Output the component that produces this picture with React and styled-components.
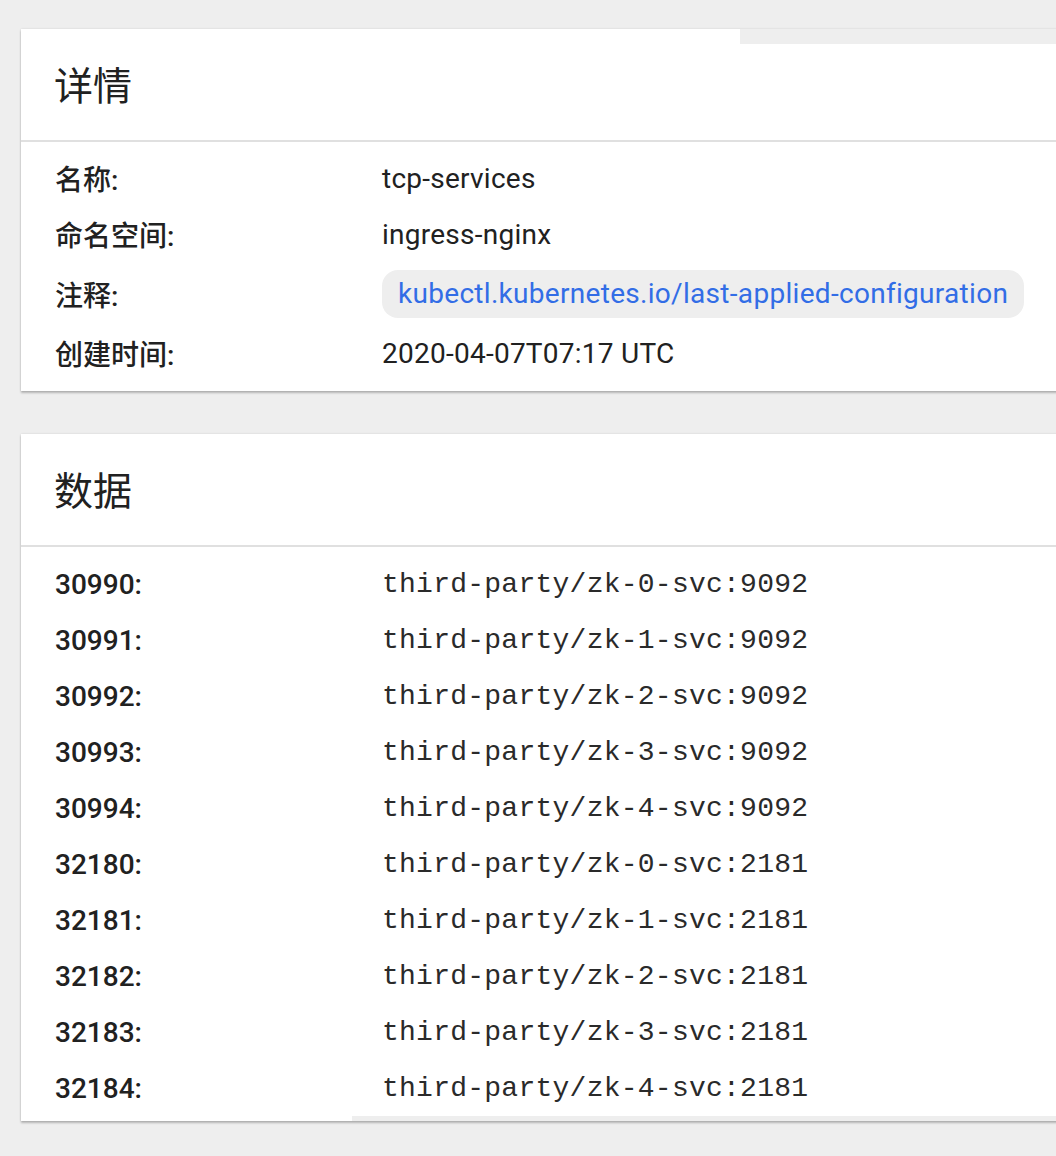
import React from "react";
import { styled, createGlobalStyle } from "styled-components";

const details = [
  { label: "名称:", value: "tcp-services" },
  { label: "命名空间:", value: "ingress-nginx" },
  { label: "注释:", chip: "kubectl.kubernetes.io/last-applied-configuration" },
  { label: "创建时间:", value: "2020-04-07T07:17 UTC" },
];

const data = [
  ["30990", "third-party/zk-0-svc:9092"],
  ["30991", "third-party/zk-1-svc:9092"],
  ["30992", "third-party/zk-2-svc:9092"],
  ["30993", "third-party/zk-3-svc:9092"],
  ["30994", "third-party/zk-4-svc:9092"],
  ["32180", "third-party/zk-0-svc:2181"],
  ["32181", "third-party/zk-1-svc:2181"],
  ["32182", "third-party/zk-2-svc:2181"],
  ["32183", "third-party/zk-3-svc:2181"],
  ["32184", "third-party/zk-4-svc:2181"],
];

const App = () => {
  return (
    <>
      <GlobalStyle />
      <Page>
        <Card>
          <TopMask />
          <CardHeader>详情</CardHeader>
          <CardBody $top={8} $bottom={10}>
            {details.map((item) => (
              <Row key={item.label} $tall={!!item.chip}>
                <Label>{item.label}</Label>
                {item.chip ? (
                  <Chip>{item.chip}</Chip>
                ) : (
                  <Value>{item.value}</Value>
                )}
              </Row>
            ))}
          </CardBody>
        </Card>

        <Card>
          <CardHeader>数据</CardHeader>
          <CardBody $top={9} $bottom={5}>
            {data.map(([key, value]) => (
              <Row key={key}>
                <Label>{key}:</Label>
                <MonoValue>{value}</MonoValue>
              </Row>
            ))}
          </CardBody>
          <BottomMask />
        </Card>
      </Page>
    </>
  );
};

export default App;

const GlobalStyle = createGlobalStyle`
  html, body {
    margin: 0;
    padding: 0;
    background: #eeeeee;
    overflow: hidden;
  }
  body {
    font-family: Roboto, "Noto Sans CJK SC", sans-serif;
    color: rgba(0, 0, 0, 0.87);
  }
`;

const Page = styled.div`
  display: flex;
  flex-direction: column;
  gap: 43px;
  padding: 29px 0 40px 21px;
  min-height: 1156px;
  box-sizing: border-box;
`;

const Card = styled.section`
  position: relative;
  background: #ffffff;
  margin-right: -60px;
  box-shadow: 0 2px 2px rgba(0, 0, 0, 0.24), 0 0 2px rgba(0, 0, 0, 0.12);
`;

const TopMask = styled.div`
  position: absolute;
  top: 0;
  left: 719px;
  right: 0;
  height: 15px;
  background: #eeeeee;
`;

const BottomMask = styled.div`
  position: absolute;
  bottom: 0;
  left: 331px;
  right: 0;
  height: 5px;
  background: #eeeeee;
`;

const CardHeader = styled.h2`
  margin: 0;
  height: 113px;
  box-sizing: border-box;
  padding: 0 0 3px 33px;
  display: flex;
  align-items: center;
  font-family: Roboto, "Noto Sans CJK SC", sans-serif;
  font-size: 39px;
  font-weight: 400;
  color: #212121;
  border-bottom: 2px solid #e0e0e0;
`;

const CardBody = styled.div`
  padding: ${(p) => p.$top}px 0 ${(p) => p.$bottom}px 34px;
`;

const Row = styled.div`
  display: grid;
  grid-template-columns: 327px 1fr;
  align-items: center;
  height: ${(p) => (p.$tall ? 63 : 56)}px;
`;

const Label = styled.div`
  font-size: 28px;
  font-weight: 500;
  color: #212121;
`;

const Value = styled.div`
  font-size: 28px;
  letter-spacing: 0.25px;
  color: #212121;
`;

const MonoValue = styled.div`
  font-family: "Liberation Mono", "Courier New", monospace;
  font-size: 28px;
  letter-spacing: 0.25px;
  color: #2a2a2a;
`;

const Chip = styled.div`
  justify-self: start;
  height: 48px;
  display: flex;
  align-items: center;
  padding: 0 16px;
  border-radius: 16px;
  background: #eeeeee;
  color: #326de6;
  font-size: 28px;
  letter-spacing: 0.3px;
`;
